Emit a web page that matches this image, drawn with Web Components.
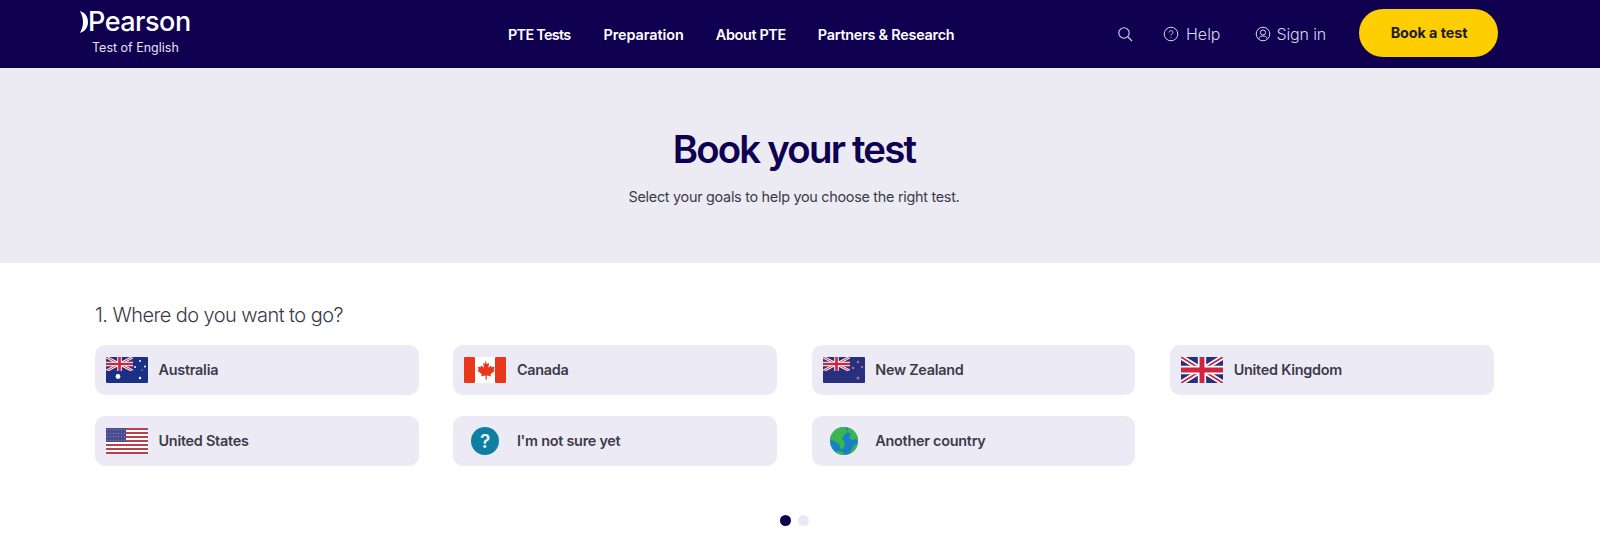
<!DOCTYPE html>
<html lang="en"><head><meta charset="utf-8"><title>Book your test</title>
<style>
html,body{margin:0;padding:0;background:#fff;font-family:Inter,"Liberation Sans",sans-serif}
body{overflow:hidden}
</style></head><body>
<site-header></site-header>
<hero-band heading="Book your test" sub="Select your goals to help you choose the right test."></hero-band>
<goal-step title-text="1. Where do you want to go?">
  <goal-card label="Australia"><flag-icon kind="au"></flag-icon></goal-card>
  <goal-card label="Canada"><flag-icon kind="ca"></flag-icon></goal-card>
  <goal-card label="New Zealand"><flag-icon kind="nz"></flag-icon></goal-card>
  <goal-card label="United Kingdom"><flag-icon kind="uk"></flag-icon></goal-card>
  <goal-card label="United States"><flag-icon kind="us"></flag-icon></goal-card>
  <goal-card label="I'm not sure yet"><flag-icon kind="q"></flag-icon></goal-card>
  <goal-card label="Another country"><flag-icon kind="globe"></flag-icon></goal-card>
</goal-step>
<pager-dots></pager-dots>
<script>
const ukjack=(w,h)=>`<rect width="${w}" height="${h}" fill="#26307f"/>
<path d="M0 0L${w} ${h}M${w} 0L0 ${h}" stroke="#fff" stroke-width="${h*.2}"/>
<path d="M0 0L${w} ${h}M${w} 0L0 ${h}" stroke="#d0243f" stroke-width="${h*.07}"/>
<path d="M${w/2} 0V${h}M0 ${h/2}H${w}" stroke="#fff" stroke-width="${h*.32}"/>
<path d="M${w/2} 0V${h}M0 ${h/2}H${w}" stroke="#d0243f" stroke-width="${h*.19}"/>`;
const star=(x,y,r,f)=>`<circle cx="${x}" cy="${y}" r="${r}" fill="${f}"/>`;
const ICONS={
au:`<svg viewBox="0 0 42 26" width="42" height="26"><rect width="42" height="26" rx="1" fill="#1c2f86"/><svg width="27" height="14" viewBox="0 0 27 14">${ukjack(27,14)}</svg>
${star(12,19.5,2.4,'#fff')}${star(34,4,1,'#fff')}${star(29,10,1,'#fff')}${star(39,9.5,1,'#fff')}${star(34,21,1.2,'#fff')}${star(36,13,.6,'#fff')}</svg>`,
nz:`<svg viewBox="0 0 42 26" width="42" height="26"><rect width="42" height="26" rx="1" fill="#26307f"/><svg width="27" height="14" viewBox="0 0 27 14">${ukjack(27,14)}</svg>
${star(35,5,1.3,'#c9607a')}${star(30,11,1.3,'#c9607a')}${star(39,10,1.2,'#c9607a')}${star(35,21,1.5,'#c9607a')}</svg>`,
ca:`<svg viewBox="0 0 42 26" width="42" height="26"><rect width="42" height="26" rx="1" fill="#fff"/><rect width="11" height="26" rx="1" fill="#e8371a"/><rect x="31" width="11" height="26" rx="1" fill="#e8371a"/>
<path transform="translate(21 13) scale(1.2) translate(-21 -13)" d="M21 5l1.700 3 1.800-1-.7 4.200 2.200-2 .6 1.500 2.400-.4-.8 2.800 1 .5-3.600 3 .5 1.600-3.600-.6-.1 3.600h-.9l-.1-3.600-3.600.6.5-1.600-3.600-3 1-.5-.8-2.800 2.400.4.6-1.500 2.200 2-.7-4.200 1.800 1z" fill="#e8371a"/></svg>`,
uk:`<svg viewBox="0 0 42 26" width="42" height="26">${ukjack(42,26)}</svg>`,
us:`<svg viewBox="0 0 42 26" width="42" height="26"><rect width="42" height="26" fill="#fff"/>${[0,4,8,12,16,20,24].map(y=>`<rect y="${y}" width="42" height="2" fill="#b8404f"/>`).join('')}<rect width="20" height="14" fill="#4a4c8c"/>${Array.from({length:28},(_,i)=>star(1.6+(i%7)*2.8,1.7+Math.floor(i/7)*3.5,.45,'#c9cbe6')).join('')}</svg>`,
q:`<svg viewBox="0 0 42 30" width="42" height="30"><circle cx="21" cy="15" r="14" fill="#0f7ea3"/><text x="21" y="21.500" text-anchor="middle" font-family="Inter,Liberation Sans,sans-serif" font-size="19" font-weight="600" fill="#e6f3f8">?</text></svg>`,
globe:`<svg viewBox="0 0 42 30" width="42" height="30"><defs><clipPath id="g"><circle cx="21" cy="15" r="14"/></clipPath></defs><circle cx="21" cy="15" r="14" fill="#1a7fc4"/><g clip-path="url(#g)" fill="#3bb54f"><path d="M9 1h13l3 5-4 3-2 4 3 3-1 5-3 3-2-6-5-3-5-2 1-8z"/><path d="M25 2l10 3 4 8-3 3-3-3-4 1-3-3 2-3-3-2z"/><path d="M31 19l5-2-1 8-6 4-3-1 3-5z"/><path d="M14 25l6 1 2 4h-9z"/></g></svg>`
};
function el(name,html){customElements.define(name,class extends HTMLElement{connectedCallback(){if(!this.shadowRoot){this.attachShadow({mode:'open'}).innerHTML=typeof html==='function'?html(this):html;}}});}
el('flag-icon',h=>`<style>:host{display:flex;width:42px;height:30px;align-items:center;justify-content:center;flex:none}svg{display:block}</style>${ICONS[h.getAttribute('kind')]}`);
el('nav-link',`<style>:host{display:block;color:#fff;font:600 14.4px/20px Inter,"Liberation Sans",sans-serif;white-space:nowrap}</style><slot></slot>`);
el('util-link',`<style>:host{display:flex;align-items:center;gap:6px;color:#d9d6ef;font:300 16px/20px Inter,"Liberation Sans",sans-serif;white-space:nowrap}</style><slot name="i"></slot><slot></slot>`);
el('site-header',`<style>
:host{display:flex;height:68px;background:#0f0050;box-sizing:border-box;align-items:center;position:relative}
.logo{margin-left:80px;width:112px;height:68px;display:flex;flex-direction:column;align-items:flex-start;color:#fff;flex:none}
.brand{display:flex;align-items:center;margin-top:7px;font:500 27px/30px Inter,"Liberation Sans",sans-serif;letter-spacing:-.5px;height:30px}
.tag{font:400 12.5px/16px Inter,"Liberation Sans",sans-serif;color:#e6e4f5;margin-top:3px;margin-left:12px}
nav{display:flex;margin-left:316px;padding-top:2px}
nav-link:nth-child(1){letter-spacing:-.7px;margin-right:33px}
nav-link:nth-child(2){letter-spacing:-.05px;margin-right:32px}
nav-link:nth-child(3){letter-spacing:-.35px;margin-right:32px}
nav-link:nth-child(4){letter-spacing:-.25px}
.right{display:flex;align-items:center;margin-left:auto;margin-right:102px}
.btn{display:flex;align-items:center;justify-content:center;width:139px;height:48px;border-radius:24px;background:#ffce00;color:#1d1a30;font:700 14.4px/20px Inter,"Liberation Sans",sans-serif;letter-spacing:-.1px;margin-left:33px;margin-top:-2px;padding-left:1px;box-sizing:border-box}
.s{margin-right:30px}
.h{margin-right:34px;gap:7px}
.si{letter-spacing:-.15px}
svg{display:block}
</style>
<div class="logo"><div class="brand"><svg width="8" height="22" viewBox="0 0 8 22"><path d="M0 0c4.500 1.500 8 5 8 11S4.500 20.500 0 22c1.800-3.500 3-7 3-11S1.800 3.500 0 0z" fill="#fff"/></svg><span>Pearson</span></div><div class="tag">Test of English</div></div>
<nav><nav-link>PTE Tests</nav-link><nav-link>Preparation</nav-link><nav-link>About PTE</nav-link><nav-link>Partners &amp; Research</nav-link></nav>
<div class="right">
<util-link class="s"><svg slot="i" width="16" height="16" viewBox="0 0 16 16" fill="none" stroke="#d9d6ef" stroke-width="1.100"><circle cx="7" cy="7" r="5.200"/><path d="M11 11l4 4"/></svg></util-link>
<util-link class="h"><svg slot="i" width="16" height="16" viewBox="0 0 16 16" fill="none" stroke="#d9d6ef" stroke-width="1"><circle cx="8" cy="8" r="6.800"/><path d="M6.200 6.400c0-2.300 3.700-2.300 3.700 0 0 1.500-1.900 1.400-1.900 3"/><circle cx="8" cy="11.300" r=".5" fill="#d9d6ef" stroke="none"/></svg>Help</util-link>
<util-link class="si"><svg slot="i" width="16" height="16" viewBox="0 0 16 16" fill="none" stroke="#d9d6ef" stroke-width="1"><circle cx="8" cy="8" r="6.800"/><circle cx="8" cy="6.500" r="2.600"/><path d="M3.500 12.800c1-2 2.700-2.800 4.500-2.800s3.500.8 4.500 2.800"/></svg>Sign in</util-link>
<div class="btn">Book a test</div>
</div>`);
el('hero-band',h=>`<style>:host{display:flex;flex-direction:column;align-items:center;height:195px;background:#ecebf3;box-sizing:border-box;padding:58px 12px 0 0}
h1{margin:0;font:600 38.400px/46px Inter,"Liberation Sans",sans-serif;letter-spacing:-1.800px;color:#0f0050}
p{margin:15px 0 0;font:400 14.4px/20px Inter,"Liberation Sans",sans-serif;color:#3c3a4a;letter-spacing:-.28px}</style>
<h1>${h.getAttribute('heading')}</h1><p>${h.getAttribute('sub')}</p>`);
el('goal-step',h=>`<style>:host{display:block;padding:38px 106px 0 95px}
h2{margin:0 0 16px;font:300 20px/28px Inter,"Liberation Sans",sans-serif;color:#3c3a4a;letter-spacing:-.57px}
.g{display:grid;grid-template-columns:repeat(4,323.500px);column-gap:34.900px;row-gap:21px}</style>
<h2>${h.getAttribute('title-text')}</h2><div class="g"><slot></slot></div>`);
el('goal-card',h=>`<style>:host{display:flex;align-items:center;gap:10.500px;height:50px;border-radius:10px;background:#ecebf5;padding-left:11px;box-sizing:border-box;color:#3c3a4a;font:600 14.4px/20px Inter,"Liberation Sans",sans-serif;letter-spacing:-.25px}</style><slot></slot><span>${h.getAttribute('label')}</span>`);
el('pager-dots',`<style>:host{display:flex;justify-content:center;gap:7px;margin-top:49px;padding-right:12px}i{display:block;width:11px;height:11px;border-radius:50%;background:#e9e8f6}i.a{background:#0f0050}</style><i class="a"></i><i></i>`);
</script>
</body></html>
